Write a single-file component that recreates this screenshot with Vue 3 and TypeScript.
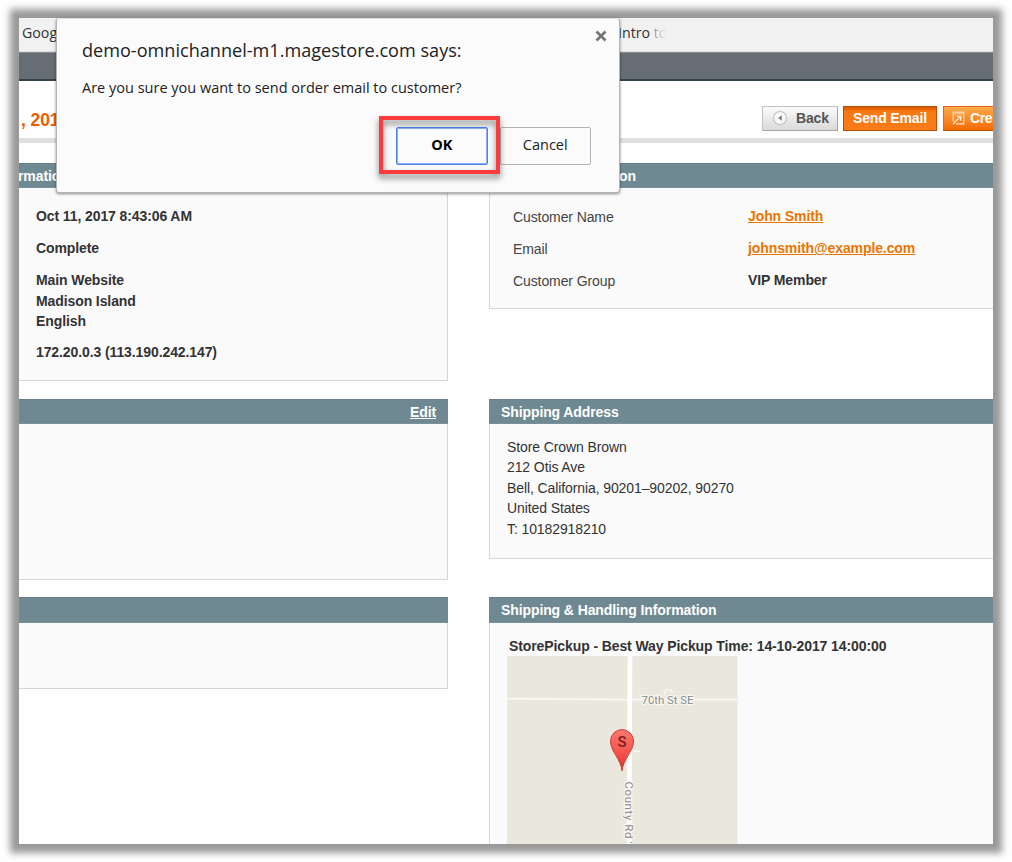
<script setup lang="ts">
interface Row {
  label: string
  value: string
  link: boolean
}

const customer: Row[] = [
  { label: 'Customer Name', value: 'John Smith', link: true },
  { label: 'Email', value: 'johnsmith@example.com', link: true },
  { label: 'Customer Group', value: 'VIP Member', link: false },
]

const address: string[] = [
  'Store Crown Brown',
  '212 Otis Ave',
  'Bell, California, 90201–90202, 90270',
  'United States',
  'T: 10182918210',
]
</script>

<template>
  <div class="stage">
    <div class="frame">
      <div class="bookmarks">
        <span class="bm-left">Google</span>
        <span class="bm-right">Intro <i>to</i></span>
      </div>
      <div class="nav"></div>

      <div class="page-head">
        <h1>, 2017</h1>
        <div class="actions">
          <button class="btn back">
            <svg width="16" height="16" viewBox="0 0 16 16">
              <circle cx="8" cy="8" r="6.5" fill="#f8f8f8" stroke="#c2c2c2" stroke-width="1.2" />
              <path d="M9.8 5.2v5.6L6 8z" fill="#808080" />
            </svg>
            <span>Back</span>
          </button>
          <button class="btn send"><span>Send Email</span></button>
          <button class="btn create">
            <svg width="13" height="14" viewBox="0 0 13 14">
              <path d="M1.2 10.5V1.2h10.6v11.6H4" fill="none" stroke="#ffe0bd" stroke-width="1.3" />
              <path d="M1 2.8h10.5" stroke="#ffd0a0" stroke-width="1" />
              <path d="M1 13l7-7M4.5 5.4h4.2v4.4" fill="none" stroke="#ffe8d0" stroke-width="1.4" />
            </svg>
            <span>Cre</span>
          </button>
        </div>
      </div>

      <div class="columns">
        <div class="col left">
          <section class="panel p-order">
            <header><b class="cut">rmation</b></header>
            <div class="body strong">
              <p>Oct 11, 2017 8:43:06 AM</p>
              <p>Complete</p>
              <p>Main Website<br />Madison Island<br />English</p>
              <p>172.20.0.3 (113.190.242.147)</p>
            </div>
          </section>
          <section class="panel p-billing">
            <header><a class="edit">Edit</a></header>
            <div class="body"></div>
          </section>
          <section class="panel p-payment">
            <header></header>
            <div class="body"></div>
          </section>
        </div>

        <div class="col right">
          <section class="panel p-account">
            <header><b>Account Information</b></header>
            <div class="body">
              <div v-for="r in customer" :key="r.label" class="row">
                <span class="label">{{ r.label }}</span>
                <span class="value" :class="{ link: r.link }">{{ r.value }}</span>
              </div>
            </div>
          </section>
          <section class="panel p-address">
            <header><b>Shipping Address</b></header>
            <div class="body">
              <div v-for="line in address" :key="line" class="line">{{ line }}</div>
            </div>
          </section>
          <section class="panel p-shipping">
            <header><b>Shipping &amp; Handling Information</b></header>
            <div class="body">
              <div class="pickup">StorePickup - Best Way Pickup Time: 14-10-2017 14:00:00</div>
              <svg class="map" width="231" height="200" viewBox="0.5 0.5 231 200">
                <defs>
                  <linearGradient id="pin" x1="0" y1="0" x2="0" y2="1">
                    <stop offset="0" stop-color="#fb7a70" />
                    <stop offset="0.6" stop-color="#f5504b" />
                    <stop offset="1" stop-color="#d62f2c" />
                  </linearGradient>
                </defs>
                <rect width="231" height="201" fill="#eae8dd" />
                <path d="M0 43.2L120 44.2H231" fill="none" stroke="#f8f7f2" stroke-width="1.8" />
                <path d="M158 41q-1-7 4-7t3 4" fill="none" stroke="#f8f7f2" stroke-width="1.5" />
                <path d="M123.500 0L122.500 201" stroke="#fff" stroke-width="4.600" />
                <path d="M124 95l10 1.500" stroke="#f8f7f2" stroke-width="1.300" />
                <text class="street" x="135" y="48.500" textLength="52">70th St SE</text>
                <text class="street" transform="translate(118 126) rotate(90)" textLength="57">County Rd</text>
                <path d="M125.500 187h-1.500" stroke="#8b8b8b" stroke-width="1" />
                <path
                  d="M115.500 115.500C114.700 104 104 96 104 85.600a11.500 11.500 0 0 1 23 0C127 96 116.300 104 115.500 115.500z"
                  fill="url(#pin)" stroke="#c8413c" stroke-width="1" />
                <text class="pin-letter" x="115.500" y="91" text-anchor="middle">S</text>
              </svg>
            </div>
          </section>
        </div>
      </div>

      <div class="dialog">
        <div class="title">demo-omnichannel-m1.magestore.com says:</div>
        <div class="message">Are you sure you want to send order email to customer?</div>
        <div class="choices">
          <button class="choice ok">OK</button>
          <button class="choice cancel">Cancel</button>
        </div>
        <svg class="close" width="12" height="12" viewBox="0 0 12 12">
          <path d="M1.500 1.500l9 9M10.500 1.500l-9 9" stroke="#737373" stroke-width="2.600" />
        </svg>
        <div class="highlight"></div>
      </div>
    </div>
  </div>
</template>

<style>
body {
  margin: 0;
  background: #fff;
}
</style>

<style scoped>
* {
  box-sizing: border-box;
}
.stage {
  width: 1012px;
  height: 862px;
  padding: 18px 19px;
  overflow: hidden;
  background: #fefefe;
  font-family: 'Liberation Sans', Arial, sans-serif;
  font-size: 14px;
  letter-spacing: -0.1px;
  color: #333;
}
.frame {
  position: relative;
  width: 974px;
  height: 826px;
  background: #fefefe;
  box-shadow: 0 0 7px 9px #999;
}
.bookmarks {
  display: flex;
  height: 34px;
  padding-left: 3px;
  background: #f1f1f1;
  border-bottom: 1px solid #ddd;
  font: 14.2px/30px 'Open Sans', 'Noto Sans', sans-serif;
  letter-spacing: 0;
  color: #333;
}
.bm-left {
  width: 596px;
}
.bm-right i {
  font-style: normal;
  background: linear-gradient(90deg, #999, #f1f1f1);
  background-clip: text;
  color: transparent;
}
.nav {
  height: 29px;
  background: #666d74;
  border-top: 1px solid #8a8e91;
  border-bottom: 2px solid #34434c;
}
.page-head {
  display: flex;
  justify-content: space-between;
  height: 62px;
  padding-top: 25px;
  border-bottom: 5px solid #dfdfdf;
  overflow: hidden;
}
h1 {
  margin: 0;
  padding-left: 2px;
  font-size: 17.5px;
  line-height: 29px;
  color: #eb5e00;
}
.actions {
  display: flex;
  width: 231px;
  overflow: hidden;
}
.btn {
  display: flex;
  flex: none;
  align-items: center;
  height: 25px;
  padding: 0;
  font: bold 14px 'Liberation Sans', Arial, sans-serif;
  letter-spacing: -0.15px;
  white-space: nowrap;
}
.back {
  width: 76px;
  margin-right: 5px;
  padding: 0 0 1px 9px;
  gap: 8px;
  border: 1px solid #c4c4c4;
  border-right-color: #a5a5a5;
  border-bottom-color: #a5a5a5;
  background: linear-gradient(#fbfbfb, #dadada);
  color: #555;
}
.send {
  width: 94px;
  margin-right: 6px;
  padding: 0 0 1px 9px;
  border: 1px solid #b94d05;
  background: linear-gradient(#d95a00, #f97912 5px, #f97b17);
  color: #fff;
}
.create {
  width: 50px;
  padding: 0 0 1px 8px;
  gap: 5px;
  border: 1px solid #e0661b;
  border-right: 0;
  border-bottom-color: #bb4d03;
  background: linear-gradient(#ffab49, #f56a04);
  color: #fff;
}
.create span {
  letter-spacing: -0.4px;
}
.columns {
  display: flex;
  justify-content: space-between;
  height: 701px;
  padding-top: 20px;
  overflow: hidden;
}
.left {
  width: 429px;
}
.right {
  width: 504px;
}
.panel {
  display: flex;
  flex-direction: column;
}
.panel header {
  flex: none;
  height: 25px;
  padding: 0 12px;
  border-top: 1px solid #66808a;
  border-bottom: 1px solid #7b919a;
  background: #6f8992;
  color: #fff;
  white-space: nowrap;
  line-height: 24px;
}
.panel .body {
  flex: 1;
  border: 1px solid #d6d6d6;
  border-top: 0;
  background: #fafafa;
  overflow: hidden;
}
.left .body {
  border-left: 0;
}
.right .body {
  border-right: 0;
}
.p-order {
  height: 218px;
  margin-bottom: 18px;
}
.p-order .body {
  padding: 18px 17px 0;
}
.p-order p {
  margin: 0 0 11.400px;
  line-height: 20.600px;
}
.p-order p:nth-child(3) {
  margin-bottom: 10px;
}
.strong {
  font-weight: bold;
}
.cut {
  margin-left: -13px;
}
.p-billing {
  height: 181px;
  margin-bottom: 17px;
}
.p-billing header {
  text-align: right;
}
.edit {
  font-weight: bold;
  text-decoration: underline;
}
.p-payment {
  height: 92px;
}
.p-account {
  height: 146px;
  margin-bottom: 90px;
}
.p-account .body {
  padding: 18px 0 0 23px;
}
.row {
  display: flex;
  height: 32px;
  line-height: 21px;
}
.label {
  width: 235px;
  padding-top: 1px;
  color: #444;
}
.value {
  font-weight: bold;
}
.link {
  color: #ea7601;
  text-decoration: underline;
}
.p-address {
  height: 160px;
  margin-bottom: 38px;
}
.p-address .body {
  padding: 12.500px 0 0 17px;
}
.line {
  line-height: 20.500px;
}
.p-shipping {
  height: 280px;
}
.p-shipping header,
.p-payment header {
  height: 26px;
}
.p-shipping .body {
  padding: 13px 0 0 17px;
}
.pickup {
  padding-left: 2px;
  line-height: 20px;
  font-weight: bold;
  white-space: nowrap;
}
.map {
  display: block;
}
.street {
  font: 11.500px Roboto, sans-serif;
  letter-spacing: 0;
  fill: #8b8b8b;
  stroke: #f7f6f2;
  stroke-width: 2.500px;
  paint-order: stroke;
}
.pin-letter {
  font: 500 15px Roboto, sans-serif;
  fill: #7c1f1b;
}
.dialog {
  position: absolute;
  top: 0;
  left: 37px;
  width: 564px;
  height: 175px;
  padding: 18px 25px 0;
  border: 1px solid #b5b5b5;
  border-top-color: #e2e2e2;
  border-radius: 3px;
  background: #fbfbfb;
  box-shadow: 0 1px 3px rgba(0, 0, 0, 0.45);
  font-family: 'Open Sans', 'Noto Sans', sans-serif;
  letter-spacing: 0;
  color: #222;
}
.title {
  font-size: 18.100px;
  line-height: 26px;
  white-space: nowrap;
}
.message {
  margin-top: 13px;
  font-size: 14.500px;
  line-height: 24px;
  white-space: nowrap;
}
.choices {
  display: flex;
  gap: 12px;
  margin: 27px 0 0 314px;
}
.choice {
  width: 91.500px;
  height: 38px;
  padding: 0 0 3px;
  border: 1px solid #b4b4b4;
  border-radius: 2px;
  background: #fbfbfb;
  font: 14.500px 'Open Sans', 'Noto Sans', sans-serif;
  color: #222;
}
.ok {
  border-color: #4a83ee;
  box-shadow: inset 0 0 0 1px #8fb2f5;
  font-weight: bold;
  color: #000;
}
.close {
  position: absolute;
  top: 11px;
  left: 538px;
}
.highlight {
  position: absolute;
  top: 97px;
  left: 322px;
  width: 121px;
  height: 58px;
  border: 4px solid #fa3c3c;
  filter: drop-shadow(0 4px 3px rgba(0, 0, 0, 0.5));
}
</style>
